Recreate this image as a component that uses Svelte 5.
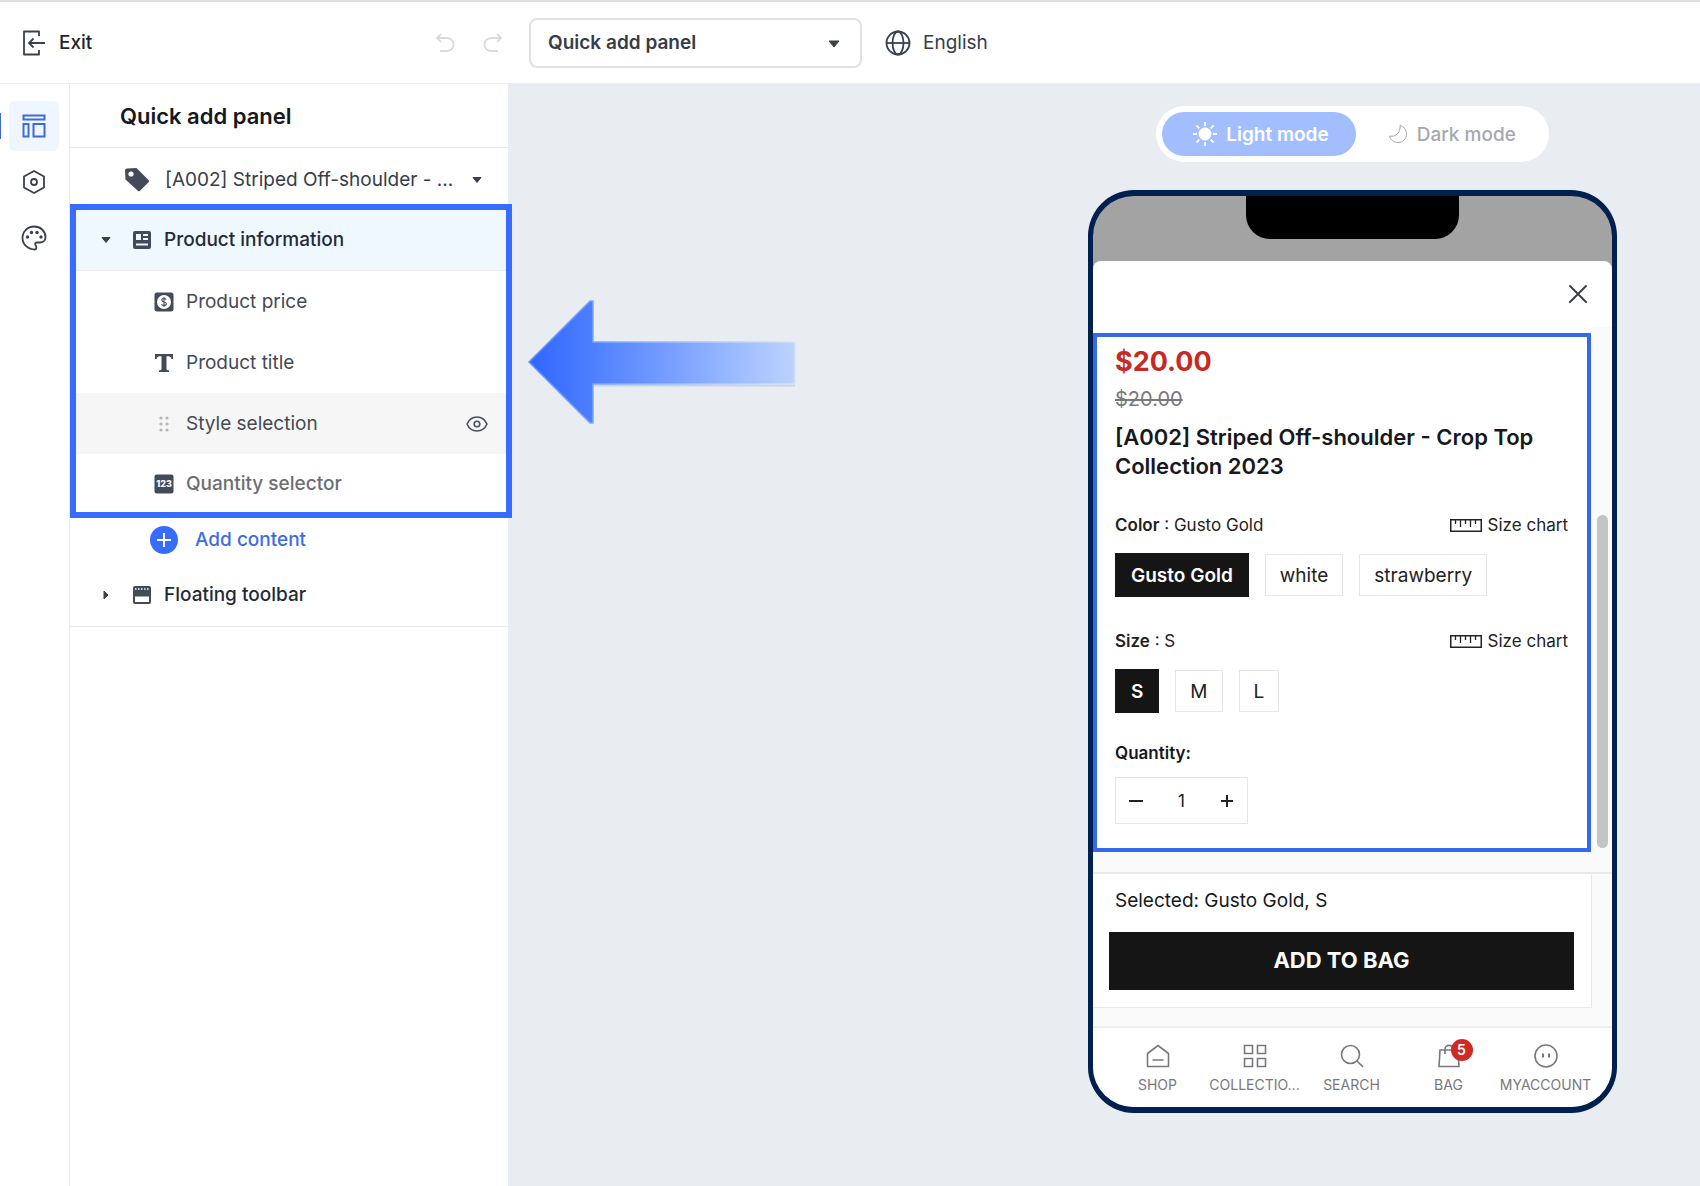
<script>
  let template = $state('Quick add panel');
  let mode = $state('light');
  let color = $state('Gusto Gold');
  let size = $state('S');
  let quantity = $state(1);

  const blocks = [
    { icon: 'price', label: 'Product price' },
    { icon: 'title', label: 'Product title' },
    { icon: 'drag', label: 'Style selection', hovered: true },
    { icon: 'count', label: 'Quantity selector', muted: true },
  ];

  const colors = ['Gusto Gold', 'white', 'strawberry'];
  const sizes = ['S', 'M', 'L'];

  const tabs = [
    { icon: 'shop', label: 'SHOP' },
    { icon: 'grid', label: 'COLLECTIO...' },
    { icon: 'search', label: 'SEARCH' },
    { icon: 'bag', label: 'BAG', badge: 5 },
    { icon: 'account', label: 'MYACCOUNT' },
  ];
</script>

{#snippet ruler()}
  <svg width="32" height="13" viewBox="0 0 32 13" fill="none" stroke="#222" aria-hidden="true">
    <rect x="0.75" y="0.75" width="30.5" height="11.5" stroke-width="1.5" />
    <path d="M5.5 1v4M10.5 1v7M15.5 1v4M20.5 1v7M25.5 1v4" stroke-width="1.3" />
  </svg>
{/snippet}

<div class="app">
  <header class="topbar">
    <div class="topbar-left">
      <a class="exit" href="#/exit">
        <svg width="24" height="26" viewBox="0 0 24 26" fill="none" stroke="#3a404c" stroke-width="1.8">
          <path d="M17 6V1.5H2v23h15V20" stroke-linejoin="round" />
          <path d="M23 13H7M11.5 8.5L7 13l4.5 4.5" />
        </svg>
        Exit
      </a>
      <div class="history">
        <button aria-label="Undo">
          <svg width="20" height="20" viewBox="0 0 20 20" fill="none" stroke="#dadadc" stroke-width="1.8">
            <path d="M6 1L2 5l4 4M2 5h10a6.5 6.5 0 0 1 0 13H5" />
          </svg>
        </button>
        <button aria-label="Redo">
          <svg width="20" height="20" viewBox="0 0 20 20" fill="none" stroke="#dadadc" stroke-width="1.8">
            <path d="M14 1l4 4-4 4M18 5H8a6.5 6.5 0 0 0 0 13h7" />
          </svg>
        </button>
      </div>
    </div>
    <div class="picker">
      <select bind:value={template} aria-label="Template">
        <option>Quick add panel</option>
      </select>
      <svg class="caret" width="12" height="8" viewBox="0 0 12 8"><path d="M1 1h10L6 7z" fill="#3a404c" stroke="#3a404c" stroke-linejoin="round" /></svg>
    </div>
    <button class="language">
      <svg width="26" height="26" viewBox="0 0 26 26" fill="none" stroke="#3a404c" stroke-width="1.8">
        <circle cx="13" cy="13" r="11.5" />
        <ellipse cx="13" cy="13" rx="5.5" ry="11.5" />
        <path d="M1.5 13h23" />
      </svg>
      English
    </button>
  </header>

  <div class="body">
    <nav class="rail">
      <button class="active" aria-label="Layout">
        <svg width="24" height="24" viewBox="0 0 24 24" fill="none" stroke="#3f68dc" stroke-width="2">
          <path d="M1.500 1.500h21v4h-21zM1.500 10h5v12.500h-5zM11.500 10h11v12.500h-11z" />
        </svg>
      </button>
      <button aria-label="Settings">
        <svg width="24" height="24" viewBox="0 0 24 24" fill="none" stroke="#3a404c" stroke-width="1.8">
          <path d="M12 1l10 5.500v11L12 23 2 17.500v-11z" stroke-linejoin="round" />
          <circle cx="12" cy="12" r="3" />
        </svg>
      </button>
      <button aria-label="Theme">
        <svg width="26" height="26" viewBox="0 0 26 26" fill="none" stroke="#3a404c" stroke-width="1.8">
          <path d="M14 24.500C7 24.500 1.500 19.500 1.500 13S6.500 1.500 13 1.500 24.500 6 24.500 12c0 3.500-2.500 5.500-5.500 5.500h-3c-1.500 0-2.500 1-1.500 2.500s1.500 4.500-.5 4.500z" />
          <g fill="#3a404c" stroke="none">
            <circle cx="6.5" cy="12" r="1.7" />
            <circle cx="10.5" cy="7.5" r="1.7" />
            <circle cx="16" cy="7.5" r="1.7" />
            <circle cx="20" cy="12" r="1.7" />
          </g>
        </svg>
      </button>
    </nav>

    <aside class="panel">
      <h1>Quick add panel</h1>
      <button class="product">
        <svg width="26" height="26" viewBox="0 0 26 26">
          <path d="M3 1.500L12.500 1l12 12c.7.700.7 1.500 0 2.200L16 23.800c-.7.700-1.500.7-2.200 0L1.500 12.500 1 3.500c0-1.200.8-2 2-2z" fill="#434b5a" />
          <circle cx="7" cy="7" r="2.600" fill="#fff" />
        </svg>
        <span>[A002] Striped Off-shoulder - ...</span>
        <svg class="drop" width="10" height="6" viewBox="0 0 10 6"><path d="M1 .5h8L5 5.500z" fill="#3a404c" stroke="#3a404c" stroke-linejoin="round" /></svg>
      </button>

      <section class="highlight">
        <button class="group open">
          <svg class="toggle" width="10" height="6" viewBox="0 0 10 6"><path d="M1 .5h8L5 5.500z" fill="#3a404c" stroke="#3a404c" stroke-linejoin="round" /></svg>
          <svg width="18" height="18" viewBox="0 0 18 18">
            <rect width="18" height="18" rx="2" fill="#434b5a" />
            <path d="M3 3h5v6H3zM10 3h5v2h-5zM10 7h5v2h-5zM3 12.500h12v2H3z" fill="#f0f7ff" />
          </svg>
          Product information
        </button>
        <ul>
          {#each blocks as block}
            <li class:hovered={block.hovered} class:muted={block.muted}>
              <svg width="20" height="20" viewBox="0 0 20 20" aria-hidden="true">
                {#if block.icon === 'price'}
                  <rect x="0.5" y="0.5" width="19" height="19" rx="2.5" fill="#434b5a" />
                  <circle cx="10" cy="10" r="7" fill="#fff" />
                  <path d="M12.300 7.700c-.4-.8-1.200-1.200-2.300-1.200-1.300 0-2.200.6-2.200 1.600 0 2.400 4.600 1.300 4.600 3.700 0 1.100-1 1.700-2.400 1.700-1.200 0-2-.5-2.500-1.300M10 5v10" fill="none" stroke="#434b5a" stroke-width="1.1" />
                {:else if block.icon === 'title'}
                  <path d="M1 1h18v5h-1.600c-.3-1.900-1.100-2.700-3-2.700h-1.900v12.500c0 1.200.6 1.500 2.500 1.600V19H5v-1.600c1.900-.1 2.500-.4 2.500-1.600V3.300H5.600c-1.900 0-2.700.8-3 2.700H1z" fill="#434b5a" />
                {:else if block.icon === 'drag'}
                  <g fill="#b4b6ba">
                    <circle cx="7" cy="4" r="1.6" /><circle cx="13" cy="4" r="1.6" />
                    <circle cx="7" cy="10" r="1.6" /><circle cx="13" cy="10" r="1.6" />
                    <circle cx="7" cy="16" r="1.6" /><circle cx="13" cy="16" r="1.6" />
                  </g>
                {:else}
                  <rect x="0.5" y="0.5" width="19" height="19" rx="2" fill="#434b5a" />
                  <text x="10" y="13" text-anchor="middle" font-size="9" font-weight="800" fill="#fff">123</text>
                {/if}
              </svg>
              <span>{block.label}</span>
              {#if block.hovered}
                <button class="eye" aria-label="Hide block">
                  <svg width="22" height="16" viewBox="0 0 22 16" fill="none" stroke="#4a505c" stroke-width="1.6">
                    <path d="M1 8c2-4.400 5.500-7 10-7s8 2.600 10 7c-2 4.400-5.500 7-10 7S3 12.400 1 8z" />
                    <circle cx="11" cy="8" r="2.800" />
                  </svg>
                </button>
              {/if}
            </li>
          {/each}
        </ul>
      </section>

      <button class="add">
        <svg width="28" height="28" viewBox="0 0 28 28">
          <circle cx="14" cy="14" r="14" fill="#366cff" />
          <path d="M14 7v14M7 14h14" stroke="#fff" stroke-width="2" />
        </svg>
        Add content
      </button>
      <button class="group closed">
        <svg class="toggle" width="10" height="10" viewBox="0 0 10 10"><path d="M3 1v8l4-4z" fill="#3a404c" stroke="#3a404c" stroke-linejoin="round" /></svg>
        <svg width="18" height="18" viewBox="0 0 18 18">
          <rect width="18" height="18" rx="2" fill="#434b5a" />
          <path d="M2 10.500h14V16H2z" fill="#fff" />
          <path d="M2 3h14" stroke="#fff" stroke-width="1.500" stroke-dasharray="1.500 1.500" />
        </svg>
        Floating toolbar
      </button>
    </aside>

    <main class="canvas">
      <svg class="pointer" width="268" height="126" viewBox="0 0 268 126" aria-hidden="true">
        <defs>
          <linearGradient id="fade" x1="0" x2="1" y1="0" y2="0">
            <stop offset="0" stop-color="#2f66ff" />
            <stop offset="0.25" stop-color="#4f80ff" />
            <stop offset="1" stop-color="#bdd3ff" />
          </linearGradient>
          <linearGradient id="edge" x1="0" x2="1" y1="0" y2="0">
            <stop offset="0" stop-color="#5f96ff" />
            <stop offset="1" stop-color="#d2e5fb" />
          </linearGradient>
        </defs>
        <path d="M66 85.500h201" stroke="#cfd2da" stroke-width="2" />
        <path d="M1 62L62 1h3v41h202v42H65v39h-3z" fill="url(#fade)" stroke="url(#edge)" stroke-width="1.500" />
      </svg>

      <div class="preview">
        <div class="modes">
          <button class="light" class:selected={mode === 'light'} onclick={() => (mode = 'light')}>
            <svg width="26" height="26" viewBox="0 0 26 26" stroke="currentColor" stroke-width="1.8">
              <circle cx="13" cy="13" r="5.5" fill="currentColor" />
              <path d="M13 1v4M13 21v4M1 13h4M21 13h4M4.500 4.500l2.800 2.800M18.700 18.700l2.800 2.800M4.500 21.500l2.800-2.800M18.700 7.300l2.800-2.800" />
            </svg>
            Light mode
          </button>
          <button class="dark" class:selected={mode === 'dark'} onclick={() => (mode = 'dark')}>
            <svg width="20" height="20" viewBox="0 0 20 20" fill="none" stroke="currentColor">
              <path d="M12 1.500c4 1 6.500 4.500 6.500 8.500 0 5-3.500 8.500-8.500 8.500-4 0-7.500-2.500-8.500-6.500 6 1.500 11.500-3.500 10.500-10.500z" />
            </svg>
            Dark mode
          </button>
        </div>

        <div class="phone">
          <div class="status"><div class="notch"></div></div>
          <div class="sheet">
            <div class="sheet-head">
              <button aria-label="Close">
                <svg width="20" height="20" viewBox="0 0 20 20" stroke="#3a3f4a" stroke-width="2" stroke-linecap="round"><path d="M2 2l16 16M18 2L2 18" /></svg>
              </button>
            </div>

            <div class="scroller">
              <div class="details">
                <p class="price">$20.00</p>
                <p class="was"><s>$20.00</s></p>
                <h2>[A002] Striped Off-shoulder - Crop Top Collection 2023</h2>

                <div class="field">
                  <span><b>Color</b> : {color}</span>
                  <a href="#/size-chart">{@render ruler()}Size chart</a>
                </div>
                <div class="options">
                  {#each colors as c}
                    <button class:chosen={color === c} onclick={() => (color = c)}>{c}</button>
                  {/each}
                </div>

                <div class="field">
                  <span><b>Size</b> : {size}</span>
                  <a href="#/size-chart">{@render ruler()}Size chart</a>
                </div>
                <div class="options">
                  {#each sizes as s}
                    <button class:chosen={size === s} onclick={() => (size = s)}>{s}</button>
                  {/each}
                </div>

                <label class="quantity-label" for="quantity">Quantity:</label>
                <div class="stepper">
                  <button aria-label="Decrease" onclick={() => (quantity = Math.max(1, quantity - 1))}>
                    <svg width="14" height="14" viewBox="0 0 14 14" stroke="#222" stroke-width="2"><path d="M0 7h14" /></svg>
                  </button>
                  <input id="quantity" type="text" bind:value={quantity} />
                  <button aria-label="Increase" onclick={() => quantity++}>
                    <svg width="14" height="14" viewBox="0 0 14 14" stroke="#222" stroke-width="2"><path d="M1 7h12M7 1v12" /></svg>
                  </button>
                </div>
              </div>
              <div class="track"><div class="thumb"></div></div>
            </div>

            <div class="summary">
              <div class="summary-box">
                <p>Selected: {color}, {size}</p>
                <button>ADD TO BAG</button>
              </div>
            </div>
          </div>

          <nav class="tabs">
            {#each tabs as tab}
              <a href="#/{tab.icon}">
                <span class="tab-icon">
                  <svg width="24" height="24" viewBox="0 0 24 24" fill="none" stroke="#77797d" stroke-width="1.6">
                    {#if tab.icon === 'shop'}
                      <path d="M1.500 9.500L12 1.500l10.500 8v13h-21zM6.500 16h11" stroke-linejoin="round" />
                    {:else if tab.icon === 'grid'}
                      <path d="M1.500 1.500h8v8h-8zM14.500 1.500h8v8h-8zM1.500 14.500h8v8h-8zM14.500 14.500h8v8h-8z" />
                    {:else if tab.icon === 'search'}
                      <circle cx="10.5" cy="10.5" r="9" />
                      <path d="M17 17l6 6" />
                    {:else if tab.icon === 'bag'}
                      <path d="M3 6h18l1 16.500H2zM8 10V5.500c0-5.500 8-5.500 8 0V10" />
                    {:else}
                      <circle cx="12" cy="12" r="11" />
                      <path d="M9 9.500v4M15 9.500v4" stroke-width="2" />
                    {/if}
                  </svg>
                  {#if tab.badge}<span class="badge">{tab.badge}</span>{/if}
                </span>
                {tab.label}
              </a>
            {/each}
          </nav>
        </div>
      </div>
    </main>
  </div>
</div>

<style>
  :global(body) {
    margin: 0;
    font-family: Inter, 'Liberation Sans', sans-serif;
    color: #16181d;
  }

  .app {
    display: flex;
    flex-direction: column;
    min-height: 100vh;
    background: #fff;
  }

  .app * {
    box-sizing: border-box;
  }

  button,
  select,
  input {
    font: inherit;
    color: inherit;
    border: 0;
    padding: 0;
    margin: 0;
    background: none;
  }

  a {
    color: inherit;
    text-decoration: none;
  }

  p,
  h1,
  h2,
  ul {
    margin: 0;
    padding: 0;
  }

  svg {
    display: block;
    flex: none;
  }

  /* top bar */
  .topbar {
    display: flex;
    align-items: center;
    height: 84px;
    border-top: 2px solid #e0e0e0;
    border-bottom: 1px solid #ebecee;
    font-size: 19px;
  }

  .topbar-left {
    display: flex;
    align-items: center;
    justify-content: space-between;
    width: 529px;
    padding: 0 26px 0 22px;
  }

  .exit {
    display: flex;
    align-items: center;
    gap: 13px;
    font-weight: 500;
    color: #23262e;
  }

  .history {
    display: flex;
    gap: 28px;
  }

  .picker {
    position: relative;
    width: 333px;
  }

  .picker select {
    appearance: none;
    width: 100%;
    height: 50px;
    padding: 0 48px 0 17px;
    border: 2px solid #dfe1e6;
    border-radius: 8px;
    font-weight: 600;
    color: #363c49;
  }

  .caret {
    position: absolute;
    right: 22px;
    top: 22px;
    pointer-events: none;
  }

  .language {
    display: flex;
    align-items: center;
    gap: 12px;
    margin-left: 23px;
    color: #363c49;
  }

  .body {
    display: flex;
    flex: 1;
  }

  /* icon rail */
  .rail {
    display: flex;
    flex-direction: column;
    align-items: center;
    gap: 6px;
    width: 70px;
    padding: 17px 1px 0 0;
    border-right: 1px solid #e8e9eb;
  }

  .rail button {
    display: grid;
    place-items: center;
    width: 50px;
    height: 50px;
    border-radius: 6px;
  }

  .rail .active {
    position: relative;
    background: #eff6ff;
  }

  .rail .active::before {
    content: '';
    position: absolute;
    left: -10px;
    top: 12px;
    width: 2px;
    height: 26px;
    background: #3f68dc;
  }

  /* side panel */
  .panel {
    display: flex;
    flex-direction: column;
    width: 438px;
    font-size: 19px;
    line-height: 24px;
  }

  h1 {
    padding: 21px 50px 19px;
    border-bottom: 1px solid #e8e9eb;
    font-size: 22px;
    font-weight: 600;
    line-height: 23px;
  }

  .product {
    display: flex;
    align-items: center;
    height: 56px;
    padding: 7px 26px 0 54px;
    gap: 15px;
    color: #363c49;
    white-space: nowrap;
  }

  .drop {
    margin-left: auto;
  }

  .highlight {
    position: relative;
    z-index: 1;
    margin-right: -4px;
    border: 6px solid #366cff;
    background: #fff;
  }

  .group {
    display: flex;
    align-items: center;
    width: 100%;
    font-weight: 500;
    color: #242a36;
  }

  .group .toggle {
    margin-right: 22px;
  }

  .group svg + svg {
    margin-right: 13px;
  }

  .open {
    height: 61px;
    padding-left: 25px;
    border-bottom: 1px solid #e9eaf2;
    background: #eff7ff;
  }

  .closed {
    height: 65px;
    padding: 2px 0 0 31px;
    border-bottom: 1px solid #e8e9eb;
  }

  ul {
    list-style: none;
  }

  li {
    display: flex;
    align-items: center;
    height: 61px;
    padding: 0 18px 0 78px;
    gap: 12px;
    color: #454a54;
  }

  .hovered {
    background: #f6f6f6;
  }

  .muted {
    height: 58px;
    padding-top: 2px;
    font-weight: 500;
    color: #6c6e72;
  }

  .eye {
    margin-left: auto;
  }

  .add {
    display: flex;
    align-items: center;
    gap: 17px;
    height: 44px;
    padding-left: 80px;
    font-weight: 500;
    color: #3d6be8;
  }

  /* canvas */
  .canvas {
    position: relative;
    display: flex;
    flex: 1;
    justify-content: flex-end;
    padding: 22px 83px 73px 20px;
    background: #e9ecf1;
  }

  .pointer {
    position: absolute;
    left: 20px;
    top: 216px;
  }

  .preview {
    display: flex;
    flex-direction: column;
    align-items: center;
    gap: 28px;
    width: 100%;
    max-width: 529px;
  }

  .modes {
    display: flex;
    padding: 6px;
    border-radius: 28px;
    background: #fff;
  }

  .modes button {
    display: flex;
    align-items: center;
    height: 44px;
    border-radius: 22px;
    font-size: 19px;
    font-weight: 500;
    color: #a6a8ad;
  }

  .modes .light {
    gap: 8px;
    padding: 0 27px 0 30px;
  }

  .modes .dark {
    gap: 9px;
    padding: 0 27px 0 32px;
  }

  .modes .selected {
    background: #a3beff;
    color: #fff;
    font-weight: 600;
  }

  .phone {
    width: 100%;
    border: solid #00204f;
    border-width: 6px 5px;
    border-radius: 46px;
    background: #a3a3a3;
    overflow: hidden;
  }

  .status {
    display: flex;
    justify-content: center;
    height: 65px;
  }

  .notch {
    width: 213px;
    height: 43px;
    border-radius: 0 0 24px 24px;
    background: #000;
  }

  .sheet {
    border-radius: 8px 8px 0 0;
    background: #fff;
  }

  .sheet-head {
    display: flex;
    justify-content: flex-end;
    align-items: center;
    height: 66px;
    padding-right: 24px;
  }

  .scroller {
    display: flex;
    background: #fafafa;
    padding-bottom: 20px;
  }

  .details {
    flex: 1;
    margin-top: 6px;
    padding: 8px 19px 24px 18px;
    border: 4px solid #3468ee;
    background: #fff;
    box-shadow: 0 -6px #fff;
  }

  .price {
    font-size: 27px;
    font-weight: 700;
    line-height: 34px;
    color: #c72a24;
  }

  .was {
    margin-top: 8px;
    font-size: 20px;
    line-height: 24px;
    color: #77797d;
  }

  h2 {
    margin-top: 12px;
    font-size: 22px;
    font-weight: 600;
    line-height: 29px;
  }

  .field {
    display: flex;
    justify-content: space-between;
    margin-top: 32px;
    font-size: 17px;
    line-height: 24px;
    color: #222;
  }

  .field b {
    font-weight: 600;
  }

  .field a {
    display: flex;
    align-items: center;
    gap: 6px;
  }

  .options {
    display: flex;
    align-items: center;
    gap: 16px;
    height: 44px;
    margin-top: 16px;
  }

  .options button {
    height: 42px;
    padding: 0 14px;
    border: 1px solid #e6e6e6;
    font-size: 19px;
    color: #222;
  }

  .options .chosen {
    height: 44px;
    padding: 0 15px;
    border-color: #151515;
    background: #151515;
    font-weight: 600;
    color: #fff;
  }

  .quantity-label {
    display: block;
    margin-top: 28px;
    font-size: 17px;
    font-weight: 600;
    line-height: 24px;
  }

  .stepper {
    display: flex;
    width: 133px;
    height: 47px;
    margin-top: 12px;
    border: 1px solid #e6e6e6;
  }

  .stepper button {
    display: grid;
    place-items: center;
    width: 40px;
  }

  .stepper input {
    flex: 1;
    min-width: 0;
    font-size: 17px;
    text-align: center;
  }

  .track {
    display: flex;
    justify-content: flex-end;
    align-items: flex-end;
    width: 21px;
    padding: 0 4px 4px 0;
  }

  .thumb {
    width: 11px;
    height: 64%;
    border-radius: 6px;
    background: #c4c4c4;
  }

  .summary {
    padding: 0 20px 18px 0;
    border-top: 2px solid #e9e9e9;
    background: #fafafa;
  }

  .summary-box {
    padding: 15px 17px 17px 16px;
    border: solid #e9e9e9;
    border-width: 0 1px 1px 0;
    background: #fff;
  }

  .summary p {
    padding-left: 6px;
    font-size: 19px;
    line-height: 24px;
  }

  .summary button {
    display: block;
    width: 100%;
    height: 58px;
    margin-top: 19px;
    padding-bottom: 2px;
    background: #151515;
    font-size: 22px;
    font-weight: 700;
    color: #fff;
  }

  .tabs {
    display: grid;
    grid-template-columns: repeat(5, 1fr);
    padding: 16px 18px 12px 16px;
    border-top: 2px solid #efefef;
    background: #fff;
  }

  .tabs a {
    display: flex;
    flex-direction: column;
    align-items: center;
    gap: 7px;
    font-size: 14px;
    line-height: 20px;
    color: #77797d;
  }

  .tab-icon {
    position: relative;
  }

  .badge {
    position: absolute;
    left: 14px;
    top: -5px;
    width: 22px;
    height: 22px;
    border-radius: 50%;
    background: #cf2a24;
    font-weight: 600;
    line-height: 22px;
    text-align: center;
    color: #fff;
  }
</style>
